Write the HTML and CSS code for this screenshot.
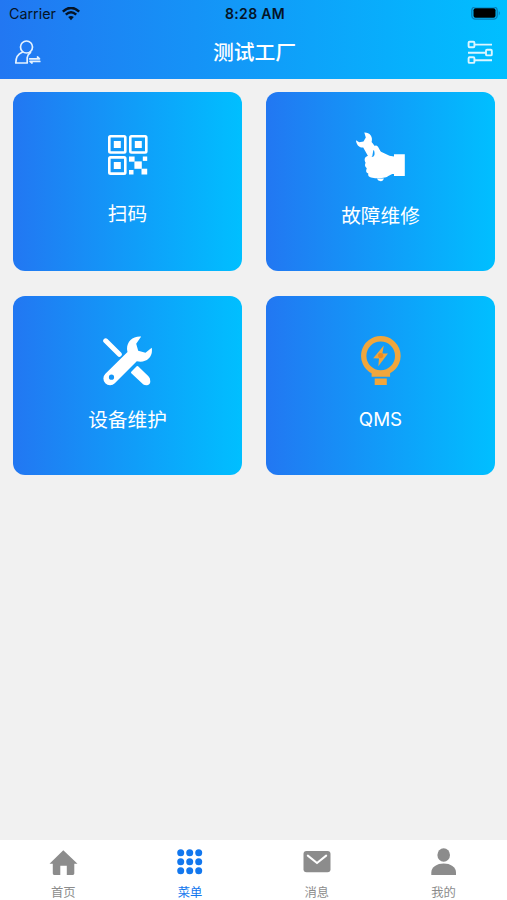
FILE: index.html
```html
<!DOCTYPE html>
<html lang="zh-CN">
<head>
<meta charset="utf-8">
<title>测试工厂</title>
<link rel="stylesheet" href="styles.css">
</head>
<body>
<header class="header">
  <div class="status">
    <div class="carrier"><span>Carrier</span>
      <svg width="18" height="14" viewBox="62 6 18 14"><g fill="none" stroke="#051426" stroke-width="2.5"><path d="M62.8 10.7Q71 3 79.2 10.7"/><path d="M65.8 13.7Q71 8.9 76.2 13.7"/></g><path d="M68.2 16Q71 13.8 73.8 16L71 19.2Z" fill="#051426"/></svg>
    </div>
    <div class="time">8:28 AM</div>
    <svg class="battery" width="30" height="14" viewBox="471 7 30 14"><rect x="471.8" y="6.8" width="25.4" height="12.4" rx="3.6" fill="none" stroke="#087cb5" stroke-width="1.3"/><rect x="473.5" y="8.3" width="22" height="9.4" rx="2" fill="#000"/><path d="M498.8 11Q500.8 13 498.8 15.4Z" fill="#087cb5"/></svg>
  </div>
  <div class="nav">
    <svg width="28" height="26" viewBox="14 39 28 26"><g fill="none" stroke="#e4f2ff" stroke-width="1.7" stroke-linejoin="round" stroke-linecap="round"><circle cx="26.5" cy="47" r="6"/><path d="M22.2 52.2C17.5 54 15.8 57.5 15.8 63H27.2V57.5Q27.5 54.5 30.5 52.5"/><path d="M29.7 58.8H39.5L37.5 57M39.8 61.4H30L32 63"/></g></svg>
    <h1 class="title">测试工厂</h1>
    <svg width="26" height="24" viewBox="467 40 26 24"><g fill="none" stroke="#dcf6ff" stroke-width="1.9"><rect x="468.6" y="41.7" width="5.8" height="5.6" rx="1"/><rect x="486" y="49.8" width="5.8" height="5.6" rx="1"/><rect x="468.6" y="57.3" width="5.8" height="5.6" rx="1"/><path d="M474.4 44.6H492M468 52.7H486M474.4 60.3H492"/></g></svg>
  </div>
</header>
<main class="grid">
  <section class="card card-scan">
    <svg width="40" height="41" viewBox="108 135 40 41"><g fill="none" stroke="#fff" stroke-width="2.6"><rect x="109.3" y="136.3" width="16" height="16.2" rx="1.2"/><rect x="130.3" y="136.3" width="16" height="16.2" rx="1.2"/><rect x="109.3" y="157.4" width="16" height="16.2" rx="1.2"/></g><g fill="#fff"><rect x="113.8" y="141" width="7" height="7"/><rect x="134.8" y="141" width="7" height="7"/><rect x="113.8" y="162" width="7" height="7"/><rect x="129" y="156.5" width="5.6" height="5.2"/><rect x="142.8" y="156.5" width="4.4" height="4.4"/><rect x="134.4" y="161.4" width="7.4" height="7.4"/><rect x="129" y="170" width="4.5" height="4.5"/><rect x="141.5" y="168.7" width="5.7" height="5.8"/></g></svg>
    <span class="label">扫码</span>
  </section>
  <section class="card">
    <svg width="50" height="50" viewBox="356 132 50 50"><g fill="#fff"><path d="M364.3 132.4C369.5 132.2 373.3 136.5 371.6 142L376.5 148.3L373.3 150.5L372.3 156H368L363.2 147.5C359.2 148 356.2 144.5 356 140.2L359.2 142.3L363.5 141.6L365.8 137.6Z"/><path d="M367 156.2C369 155 371 155.8 372.8 157C375.5 155.5 374.5 152 373.8 149.5C373.3 147 374.5 145.6 376 145.6C378.3 146 379.3 149.8 381 151.8L389.5 155.8L394 156.5V154.2H404.8V176H394V174C390.5 173.5 388.8 176.6 384.8 177.6C380.5 178.8 376 178.4 371 177.4C368.3 176.8 367.9 175 368.3 173.4C365.5 172.5 366 170 366.8 168.2C364.8 167 364.6 164.5 365.6 162.8C364 160 364.5 157 367 156.2Z"/><path d="M376.8 178.6H384Q383 181.4 380.8 181.2Q378 181.2 376.8 178.6Z"/></g></svg>
    <span class="label">故障维修</span>
  </section>
  <section class="card">
    <svg width="50" height="50" viewBox="103 336 50 50"><path d="M105.7 340.8L119.3 354.3" stroke="#fff" stroke-width="5" stroke-linecap="round"/><path fill="#fff" stroke="#fff" stroke-width="2" stroke-linejoin="round" d="M137.4 367L132 372.5L143.5 383.3Q145 384.3 147 384.2Q149.2 383.8 149.3 381.5Q149.3 378.5 148 377.3Z"/><path fill="#fff" fill-rule="evenodd" d="M141.2 336.5C131.5 335.7 125.2 343.5 127.5 352.1L105.4 373.7A6.6 6.6 0 0 0 114.8 383.3L136.8 361.2C145.8 363.5 153.5 357.2 151.7 347.8L145.5 352.8L138.2 350.7L136.2 343.7ZM114.1 377.2A2.6 2.6 0 1 1 108.9 377.2A2.6 2.6 0 0 1 114.1 377.2Z"/></svg>
    <span class="label">设备维护</span>
  </section>
  <section class="card">
    <svg width="50" height="50" viewBox="356 336 50 50"><g fill="#f0a63c"><path fill-rule="evenodd" d="M380.7 336A19.8 19.8 0 0 1 390.1 373.3V376.7H371.6V373.3A19.8 19.8 0 0 1 380.7 336ZM380.7 341.6A14.3 14.3 0 1 0 380.7 370.2A14.3 14.3 0 0 0 380.7 341.6Z"/><path d="M374.7 378.5H386.8V385H374.7Z"/><path d="M383.8 345.6L373.2 358.2L379 358.5L378.3 366.2L388 353.5L382.4 353.4Z"/></g><circle cx="380.7" cy="355.6" r="2.6" fill="#ee8a20"/></svg>
    <span class="label latin">QMS</span>
  </section>
</main>
<nav class="tabs">
  <div class="tab"><svg width="30" height="30" viewBox="48.5 847 30 30"><path fill="#8c8c8c" d="M63.8 850.2L78 863.8H74.8V873.6Q74.8 875 73.4 875H67.3V865.8H60.8V875H54.6Q53.3 875 53.3 873.6V863.8H50Z"/></svg><span>首页</span></div>
  <div class="tab active"><svg width="30" height="30" viewBox="175 847 30 30"><g fill="#1277ee"><circle cx="180.7" cy="852.7" r="3.5"/><circle cx="189.7" cy="852.7" r="3.5"/><circle cx="198.7" cy="852.7" r="3.5"/><circle cx="180.7" cy="861.8" r="3.5"/><circle cx="189.7" cy="861.8" r="3.5"/><circle cx="198.7" cy="861.8" r="3.5"/><circle cx="180.7" cy="870.8" r="3.5"/><circle cx="189.7" cy="870.8" r="3.5"/><circle cx="198.7" cy="870.8" r="3.5"/></g></svg><span>菜单</span></div>
  <div class="tab"><svg width="30" height="30" viewBox="302 847 30 30"><rect x="303.5" y="851" width="27" height="21.3" rx="3" fill="#8c8c8c"/><path d="M307.8 855.6L317 863L326.2 855.6" fill="none" stroke="#fff" stroke-width="2" stroke-linecap="round"/></svg><span>消息</span></div>
  <div class="tab"><svg width="30" height="30" viewBox="429 847 30 30"><g fill="#8c8c8c"><ellipse cx="443.7" cy="855" rx="6.3" ry="6.8"/><path d="M431.3 875V872.7C431.3 867 437 863.6 443.7 863.6S456 867 456 872.7V875Z"/></g></svg><span>我的</span></div>
</nav>
</body>
</html>
```
FILE: styles.css
```css
* { box-sizing: border-box; }
body {
  margin: 0;
  height: 900px;
  display: flex;
  flex-direction: column;
  background: #f1f1f1;
  font-family: Inter, "Noto Sans CJK SC", sans-serif;
  overflow: hidden;
}
svg { display: block; flex: none; }
.header {
  height: 79px;
  background: linear-gradient(90deg, #2277f2, #00bfff);
}
.status {
  height: 27px;
  padding: 0 6px 0 9px;
  display: grid;
  grid-template-columns: 1fr auto 1fr;
  align-items: center;
  color: #051426;
  font-size: 14.3px;
}
.carrier { display: flex; align-items: center; gap: 6px; }
.time { font-weight: 600; font-size: 14px; letter-spacing: .3px; }
.battery { justify-self: end; }
.nav {
  height: 50px;
  padding: 0 14px;
  display: flex;
  align-items: center;
  justify-content: space-between;
}
.title {
  margin: 2px 0 0;
  color: #fff;
  font-size: 20.8px;
  font-weight: 500;
  line-height: 30px;
}
.grid {
  flex: 1;
  padding: 12.5px 12px 0 13px;
  display: grid;
  grid-template-columns: 1fr 1fr;
  grid-auto-rows: 179px;
  align-content: start;
  gap: 25px 24px;
}
.card {
  border-radius: 12px;
  padding-top: 40.5px;
  display: flex;
  flex-direction: column;
  align-items: center;
  background: linear-gradient(90deg, #2277f2, #00bfff);
}
.card-scan { padding-top: 43.5px; }
.label {
  margin-top: 19px;
  color: #fff;
  font-size: 19.7px;
  font-weight: 400;
  line-height: 30px;
}
.card-scan .label { margin-top: 23px; }
.latin { font-size: 18.8px; }
.tabs {
  height: 60px;
  padding-top: 7px;
  display: grid;
  grid-template-columns: repeat(4, 1fr);
  background: #fff;
}
.tab {
  display: flex;
  flex-direction: column;
  align-items: center;
  gap: 7px;
  color: #8c8c8c;
  font-size: 12.3px;
  line-height: 18px;
}
.active { color: #1277ee; }
```
